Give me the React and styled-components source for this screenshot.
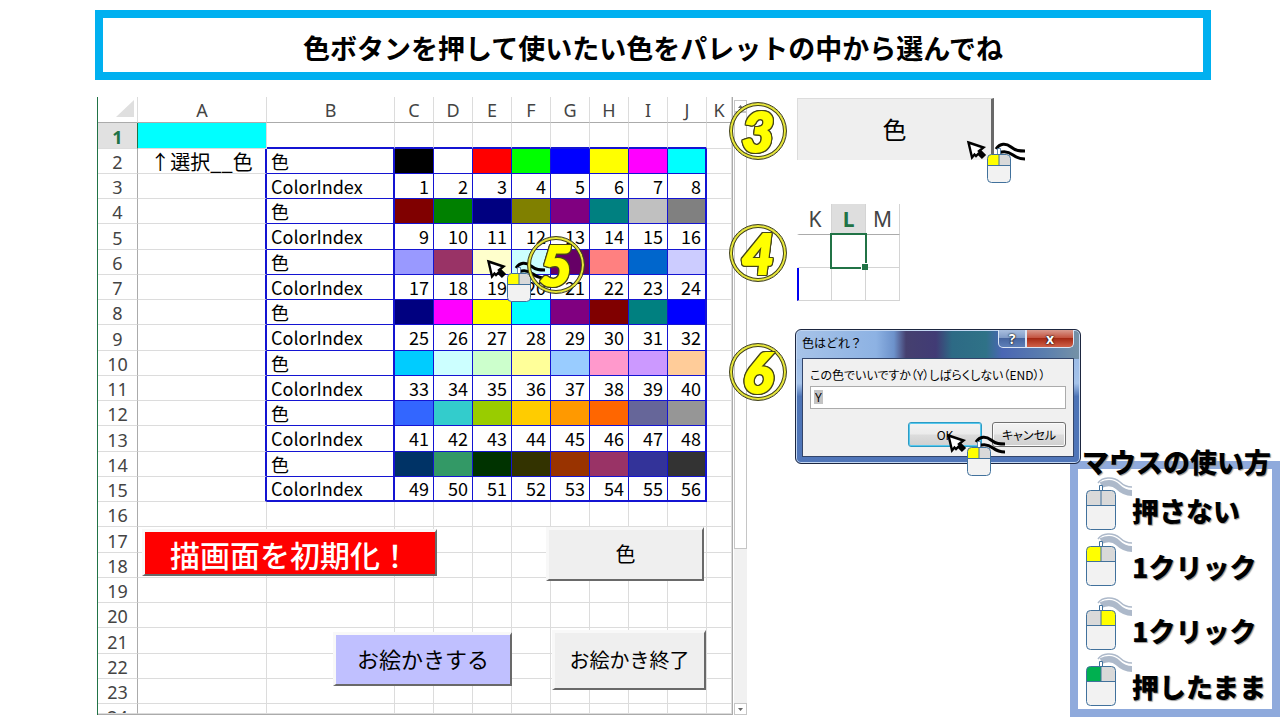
import styled, { createGlobalStyle, css } from "styled-components";

const GlobalStyle = createGlobalStyle`
  * {
    box-sizing: border-box;
  }
  body {
    margin: 0;
    background: #fff;
    color: #000;
    font-family: "Noto Sans CJK JP", sans-serif;
  }
`;

const Banner = styled.h1`
  margin: 10px 69px 0 95px;
  height: 70px;
  padding-top: 5px;
  border: 8px solid #00b0f0;
  display: flex;
  align-items: center;
  justify-content: center;
  font-size: 27px;
  font-weight: 700;
  line-height: 40px;
`;

const Main = styled.main`
  display: flex;
  align-items: flex-start;
  margin-top: 17px;
  padding-left: 97px;
`;

/* ---------- sheet ---------- */

const Sheet = styled.section`
  position: relative;
  display: flex;
  flex: none;
  border-left: 1px solid #217346;
`;

const SheetBody = styled.div`
  border-right: 1px solid #ababab;
`;

const Grid = styled.table`
  table-layout: fixed;
  width: 634px;
  border-collapse: separate;
  border-spacing: 0;
  border-bottom: 1px solid #ababab;
`;

const Col = styled.col`
  width: ${(p) => p.$w}px;
`;

const Row = styled.tr`
  height: 25px;
  &:nth-child(4n + 1) {
    height: 26px;
  }
  &:last-child {
    height: 10px;
  }
`;

const ColHead = styled.th`
  height: 26px;
  padding: 0;
  border-right: 1px solid #dcdcdc;
  border-bottom: 1px solid #ababab;
  color: #444;
  font: 400 18px/24px "Noto Sans", sans-serif;
`;

const Corner = styled.td`
  padding: 0 3px 3px 0;
  border-right: 1px solid #dcdcdc;
  border-bottom: 1px solid #ababab;
  svg {
    display: block;
    margin-left: auto;
  }
`;

const RowHead = styled.th`
  padding: 2px 0 0;
  border-right: 1px solid ${(p) => (p.$active ? "#217346" : "#ababab")};
  border-bottom: 1px solid #dcdcdc;
  background: ${(p) => (p.$active ? "#e1e1e1" : "#fff")};
  color: ${(p) => (p.$active ? "#217346" : "#444")};
  font: ${(p) => (p.$active ? 700 : 400)} 18px/22px "Noto Sans", sans-serif;
`;

const Cut = styled.div`
  height: 7px;
  overflow: hidden;
`;

const Cell = styled.td`
  padding: 0 4px;
  white-space: nowrap;
  text-align: ${(p) => p.$align || "left"};
  font-size: 20px;
  line-height: 23px;
  border-right: 1px solid #dcdcdc;
  border-bottom: 1px solid #dcdcdc;
  background: ${(p) => p.$fill || "transparent"};
  ${(p) =>
    p.$framed &&
    css`
      border-color: #1414d2;
      font-size: 18px;
    `}
  ${(p) =>
    p.$edge &&
    css`
      border-right: 2px solid #1414d2;
    `}
  ${(p) =>
    p.$low &&
    css`
      border-bottom: 2px solid #1414d2;
    `}
`;

const ScrollBar = styled.div`
  display: flex;
  flex-direction: column;
  width: 13px;
  margin: 3px 0 0 1px;
  background: #f1f1f1;
`;

const ScrollButton = styled.button`
  height: 12px;
  padding: 0;
  border: 1px solid #c6c6c6;
  background: #fff;
  display: flex;
  align-items: center;
  justify-content: center;
  &:last-child {
    margin-top: auto;
  }
`;

const Thumb = styled.div`
  height: 437px;
  border: 1px solid #c6c6c6;
  background: #fff;
`;

const FormButton = styled.button`
  padding: 0 0 3px;
  border: solid;
  border-width: 3px 2px 2px 3px;
  border-color: #f8f8f8 #696969 #696969 #f8f8f8;
  background: ${(p) => p.$bg || "#efefef"};
  color: ${(p) => p.$color || "#000"};
  font: ${(p) => p.$weight || 400} ${(p) => p.$size || 20}px "Noto Sans CJK JP", sans-serif;
  white-space: nowrap;
`;

const Placed = styled(FormButton)`
  position: absolute;
  left: ${(p) => p.$x}px;
  top: ${(p) => p.$y}px;
  width: ${(p) => p.$w}px;
  height: ${(p) => p.$h}px;
`;

const Over = styled.div`
  position: absolute;
  z-index: 2;
  left: ${(p) => p.$x}px;
  top: ${(p) => p.$y}px;
  line-height: 0;
`;

/* ---------- steps ---------- */

const Side = styled.div`
  flex: 1;
  min-width: 0;
  display: flex;
  flex-direction: column;
  margin-left: -18px;
`;

const Steps = styled.ol`
  position: relative;
  z-index: 1;
  list-style: none;
  margin: 0;
  padding: 0;
`;

const Step = styled.li`
  display: flex;
  align-items: ${(p) => p.$align || "center"};
  gap: ${(p) => p.$space || 10}px;
  margin-top: ${(p) => p.$gap}px;
`;

const Ring = styled.span`
  flex: none;
  width: 58px;
  height: 58px;
  margin-top: ${(p) => p.$drop || 0}px;
  border: 1px solid #45451a;
  border-radius: 50%;
  box-shadow: inset 0 0 0 2px #e8e83a, inset 0 0 0 3px #45451a;
  display: flex;
  align-items: center;
  justify-content: center;
`;

const Digit = styled.span`
  color: #ff0;
  font: italic 900 56px/56px Lato, sans-serif;
  -webkit-text-stroke: 2px #ff0;
  filter: drop-shadow(1px 0 0 #45451a) drop-shadow(-1px 0 0 #45451a)
    drop-shadow(0 1px 0 #45451a) drop-shadow(0 -1px 0 #45451a);
`;

const Holder = styled.div`
  position: relative;
`;

const BigButton = styled(FormButton)`
  width: 197px;
  height: 62px;
  border-width: 1px 3px 0 1px;
  border-color: #dcdcdc #696969 #dcdcdc #dcdcdc;
`;

const MiniGrid = styled.table`
  table-layout: fixed;
  width: 103px;
  border-collapse: separate;
  border-spacing: 0;
  th {
    height: 31px;
    padding: 0;
    border-right: 1px solid #d4d4d4;
    border-bottom: 1px solid #ababab;
    color: #444;
    font: 400 21px/28px "Noto Sans", sans-serif;
  }
  td {
    position: relative;
    height: 33px;
    padding: 0;
    border-right: 1px solid #d4d4d4;
    border-bottom: 1px solid #d4d4d4;
  }
  th:first-child,
  td:first-child {
    width: 35px;
    border-left: 2px solid #fff;
  }
  tr:last-child td:first-child {
    border-left-color: #0000f0;
  }
  th.on {
    background: #dedede;
    color: #217346;
    font-weight: 700;
  }
`;

const Selection = styled.div`
  position: absolute;
  z-index: 1;
  inset: -2px;
  border: 2px solid #217346;
  &::after {
    content: "";
    position: absolute;
    right: -3px;
    bottom: -3px;
    width: 6px;
    height: 6px;
    background: #217346;
    border: solid #fff;
    border-width: 1px 0 0 1px;
  }
`;

/* ---------- dialog ---------- */

const Dialog = styled.form`
  width: 286px;
  padding: 0 6px 6px;
  border: 1px solid #1d2740;
  border-radius: 6px;
  background:
    linear-gradient(90deg, #a7c3e8 0, #8db2e3 80px, #6d92cb 98px, #45406f 110px, #413b75 140px, #2d6a85 156px, #2f7287 190px, #4a66b4 206px, #5b7fae 250px, #7793a6 286px) 0 0 / 100% 29px no-repeat,
    linear-gradient(#93b4e2, #a5c3ea 40%, #4d74b6 50%, #5076b9);
  box-shadow: inset 0 0 0 1px #c3d7f2;
`;

const TitleBar = styled.div`
  display: flex;
  align-items: flex-start;
  height: 28px;
`;

const Title = styled.h2`
  flex: 1;
  margin: 0;
  font-size: 12px;
  font-weight: 400;
  line-height: 26px;
`;

const TitleButton = styled.button`
  width: ${(p) => p.$w}px;
  height: 18px;
  padding: 0;
  border: 1px solid #dbe6f5;
  border-top: 0;
  border-radius: ${(p) => (p.$red ? "0 0 5px 0" : "0 0 0 5px")};
  background: ${(p) =>
    p.$red
      ? "linear-gradient(#d99a8e, #c2503c 48%, #a52a15 50%, #cf6148)"
      : "linear-gradient(#a9bfdf, #7f9ac6 48%, #4766a0 50%, #5e7fb8)"};
  color: #fff;
  font: 700 14px/16px "Noto Sans", sans-serif;
  text-shadow: 0 0 2px #000, 0 0 1px #000;
`;

const Client = styled.div`
  height: 99px;
  padding: 6px 7px;
  border: 1px solid #33456a;
  background: #f0f0f0;
  display: flex;
  flex-direction: column;
`;

const Prompt = styled.label`
  font-size: 12px;
  line-height: 20px;
  white-space: nowrap;
  font-feature-settings: "palt";
`;

const Answer = styled.input`
  height: 23px;
  margin-top: 1px;
  padding: 0 4px;
  border: 1px solid #ababab;
  border-radius: 0;
  background: linear-gradient(#c3c3c3, #c3c3c3) 3px 3px / 9px 14px no-repeat #fff;
  font: 400 12px "Noto Sans", sans-serif;
`;

const Actions = styled.div`
  display: flex;
  justify-content: flex-end;
  gap: 10px;
  margin-top: 13px;
`;

const DialogButton = styled.button`
  width: 74px;
  height: 25px;
  padding: 0;
  border: 1px solid ${(p) => (p.$main ? "#2c9bc4" : "#707070")};
  border-radius: 3px;
  background: linear-gradient(#f3f3f3, #ebebeb 48%, #dcdcdc 52%, #cfcfcf);
  box-shadow: inset 0 0 0 1px ${(p) => (p.$main ? "#56c8ee" : "#fbfbfb")};
  font: 400 12px/20px "Noto Sans CJK JP", sans-serif;
  font-feature-settings: "palt";
`;

/* ---------- mouse guide ---------- */

const Guide = styled.section`
  align-self: flex-end;
  width: 210px;
  margin-top: -3px;
  border: 8px solid #8faadc;
  padding: 0 0 0 8px;
`;

const GuideTitle = styled.h2`
  margin: -22px -8px 0 -4px;
  font-size: 27px;
  font-weight: 900;
  line-height: 30px;
  white-space: nowrap;
  text-shadow: 1px 1px 1px #9a9a9a;
`;

const GuideList = styled.ul`
  list-style: none;
  margin: 0;
  padding: 0;
`;

const GuideItem = styled.li`
  display: flex;
  align-items: flex-start;
  height: 56px;
  font-size: 27px;
  font-weight: 900;
  line-height: 68px;
  white-space: nowrap;
  text-shadow: 1px 1px 1px #9a9a9a;
  &:nth-child(3) {
    margin-top: 8px;
  }
  svg {
    flex: none;
    margin-top: -1px;
  }
`;

const LETTERS = ["A", "B", "C", "D", "E", "F", "G", "H", "I", "J", "K"];

const PALETTE = [
  ["#000000", "#ffffff", "#ff0000", "#00ff00", "#0000ff", "#ffff00", "#ff00ff", "#00ffff"],
  ["#800000", "#008000", "#000080", "#808000", "#800080", "#008080", "#c0c0c0", "#808080"],
  ["#9999ff", "#993366", "#ffffcc", "#ccffff", "#660066", "#ff8080", "#0066cc", "#ccccff"],
  ["#000080", "#ff00ff", "#ffff00", "#00ffff", "#800080", "#800000", "#008080", "#0000ff"],
  ["#00ccff", "#ccffff", "#ccffcc", "#ffff99", "#99ccff", "#ff99cc", "#cc99ff", "#ffcc99"],
  ["#3366ff", "#33cccc", "#99cc00", "#ffcc00", "#ff9900", "#ff6600", "#666699", "#969696"],
  ["#003366", "#339966", "#003300", "#333300", "#993300", "#993366", "#333399", "#333333"],
];

const GUIDE = [
  { text: "押さない" },
  { text: "1クリック", left: "#ffff00" },
  { text: "1クリック", right: "#ffff00" },
  { text: "押したまま", left: "#00b050" },
];

const Badge = ({ children, drop }) => (
  <Ring $drop={drop}>
    <Digit>{children}</Digit>
  </Ring>
);

const PointerMouse = () => (
  <svg width="62" height="48" viewBox="0 0 62 48" fill="none">
    <path d="M13 13l6 6" stroke="#000" strokeWidth="6" />
    <path d="M3.500 4.500L18.500 9.500l-4.500 3.500 1 1-4 4-1.500-1.500-2.500 3z" fill="#fff" stroke="#000" strokeWidth="2.400" />
    <path d="M31 11c4-6 10-6 15-2s9 4 14 4" stroke="#000" strokeWidth="3" />
    <path d="M34 15c6-3 10-1 14 2s8 4 12 4" stroke="#000" strokeWidth="3" />
    <path d="M32.500 10.500h3v6h-3z" fill="#fff" stroke="#41719c" strokeWidth="0.800" />
    <rect x="22.500" y="16.500" width="23" height="28" rx="4" fill="#f2f2f2" />
    <path d="M26.500 16.500H34v11H22.500v-7a4 4 0 0 1 4-4z" fill="#ff0" />
    <path d="M34 16.500h7.500a4 4 0 0 1 4 4v7H34z" fill="#d9d9d9" />
    <path d="M34 16.500v11M22.500 27.500h23" stroke="#41719c" />
    <rect x="22.500" y="16.500" width="23" height="28" rx="4" stroke="#41719c" />
  </svg>
);

const GuideMouse = ({ left = "#d9d9d9", right = "#d9d9d9" }) => (
  <svg width="46" height="56" viewBox="0 0 46 56" fill="none">
    <path d="M12 7c4-6 15-7 22-1 4 4 8 5 12 5" stroke="#adb9ca" strokeWidth="1.500" />
    <path d="M15 9c7-3 13-2 17 2s8 6 14 6" stroke="#adb9ca" strokeWidth="6" />
    <path d="M13.500 9.500h3v6h-3z" fill="#fff" stroke="#41719c" />
    <rect x="0.500" y="14.500" width="29" height="39" rx="4" fill="#f2f2f2" />
    <path d="M4.500 14.500H15v15H0.500v-11a4 4 0 0 1 4-4z" fill={left} />
    <path d="M15 14.500h10.500a4 4 0 0 1 4 4v11H15z" fill={right} />
    <path d="M15 14.500v15M0.500 29.500h29" stroke="#41719c" />
    <rect x="0.500" y="14.500" width="29" height="39" rx="4" stroke="#41719c" />
  </svg>
);

const SheetRow = ({ n }) => {
  const inTable = n >= 2 && n <= 15;
  const colors = inTable ? PALETTE[Math.floor((n - 2) / 2)] : null;
  const swatches = n % 2 === 0;
  const first = ((n - 3) / 2) * 8 + 1;
  const low = n === 1 || n === 15;

  return (
    <Row>
      <RowHead scope="row" $active={n === 1}>
        {n === 24 ? <Cut>{n}</Cut> : n}
      </RowHead>
      <Cell $align="center" $fill={n === 1 && "#00ffff"} $edge={inTable}>
        {n === 2 && "↑選択__色"}
      </Cell>
      <Cell $framed={inTable} $edge={inTable} $low={low}>
        {inTable && (swatches ? "色" : "ColorIndex")}
      </Cell>
      {LETTERS.slice(2, 10).map((letter, i) => (
        <Cell
          key={letter}
          $align="right"
          $framed={inTable}
          $edge={inTable && i === 7}
          $low={low}
          $fill={inTable && swatches && colors[i]}
        >
          {inTable && !swatches && first + i}
        </Cell>
      ))}
      <Cell />
    </Row>
  );
};

const Spreadsheet = () => (
  <Sheet>
    <SheetBody>
      <Grid>
        <colgroup>
          <Col $w={40} />
          <Col $w={129} />
          <Col $w={128} />
          {LETTERS.slice(2, 10).map((l) => (
            <Col key={l} $w={39} />
          ))}
          <Col $w={25} />
        </colgroup>
        <thead>
          <tr>
            <Corner>
              <svg width="18" height="17">
                <path d="M18 0v17H0z" fill="#dfdfdf" />
              </svg>
            </Corner>
            {LETTERS.map((l) => (
              <ColHead key={l} scope="col">
                {l}
              </ColHead>
            ))}
          </tr>
        </thead>
        <tbody>
          {Array.from({ length: 24 }, (_, i) => (
            <SheetRow key={i} n={i + 1} />
          ))}
        </tbody>
      </Grid>
    </SheetBody>
    <ScrollBar>
      <ScrollButton aria-label="上へ">
        <svg width="5" height="3">
          <path d="M0 3l2.500-3L5 3z" fill="#666" />
        </svg>
      </ScrollButton>
      <Thumb />
      <ScrollButton aria-label="下へ">
        <svg width="5" height="3">
          <path d="M0 0l2.500 3L5 0z" fill="#666" />
        </svg>
      </ScrollButton>
    </ScrollBar>
    <Placed $x={44} $y={432} $w={295} $h={47} $bg="#ff0000" $color="#fff" $size={30} $weight={500}>
      描画面を初期化！
    </Placed>
    <Placed $x={448} $y={430} $w={158} $h={54}>
      色
    </Placed>
    <Placed $x={235} $y={535} $w={179} $h={54} $bg="#c0c0ff" $size={22}>
      お絵かきする
    </Placed>
    <Placed $x={454} $y={533} $w={154} $h={60}>
      お絵かき終了
    </Placed>
    <Over $x={387} $y={160}>
      <PointerMouse />
    </Over>
    <Over $x={429} $y={139}>
      <Badge>5</Badge>
    </Over>
  </Sheet>
);

const InputBox = () => (
  <Dialog onSubmit={(e) => e.preventDefault()}>
    <TitleBar>
      <Title>色はどれ？</Title>
      <TitleButton type="button" $w={28}>
        ?
      </TitleButton>
      <TitleButton type="button" $w={48} $red>
        x
      </TitleButton>
    </TitleBar>
    <Client>
      <Prompt htmlFor="answer">この色でいいですか（Y）しばらくしない（END））</Prompt>
      <Answer id="answer" defaultValue="Y" />
      <Actions>
        <DialogButton $main>OK</DialogButton>
        <DialogButton type="button">キャンセル</DialogButton>
      </Actions>
    </Client>
  </Dialog>
);

const App = () => (
  <>
    <GlobalStyle />
    <Banner>色ボタンを押して使いたい色をパレットの中から選んでね</Banner>
    <Main>
      <Spreadsheet />
      <Side>
        <Steps>
          <Step $gap={1} $align="flex-end">
            <Badge>3</Badge>
            <Holder>
              <BigButton $size={24}>色</BigButton>
              <Over $x={168} $y={40}>
                <PointerMouse />
              </Over>
            </Holder>
          </Step>
          <Step $gap={44}>
            <Badge>4</Badge>
            <MiniGrid>
              <thead>
                <tr>
                  <th scope="col">K</th>
                  <th scope="col" className="on">
                    L
                  </th>
                  <th scope="col">M</th>
                </tr>
              </thead>
              <tbody>
                <tr>
                  <td />
                  <td>
                    <Selection />
                  </td>
                  <td />
                </tr>
                <tr>
                  <td />
                  <td />
                  <td />
                </tr>
              </tbody>
            </MiniGrid>
          </Step>
          <Step $gap={28} $space={8} $align="flex-start">
            <Badge drop={14}>6</Badge>
            <Holder>
              <InputBox />
              <Over $x={150} $y={102}>
                <PointerMouse />
              </Over>
            </Holder>
          </Step>
        </Steps>
        <Guide>
          <GuideTitle>マウスの使い方</GuideTitle>
          <GuideList>
            {GUIDE.map((g, i) => (
              <GuideItem key={i}>
                <GuideMouse left={g.left} right={g.right} />
                {g.text}
              </GuideItem>
            ))}
          </GuideList>
        </Guide>
      </Side>
    </Main>
  </>
);

export default App;
